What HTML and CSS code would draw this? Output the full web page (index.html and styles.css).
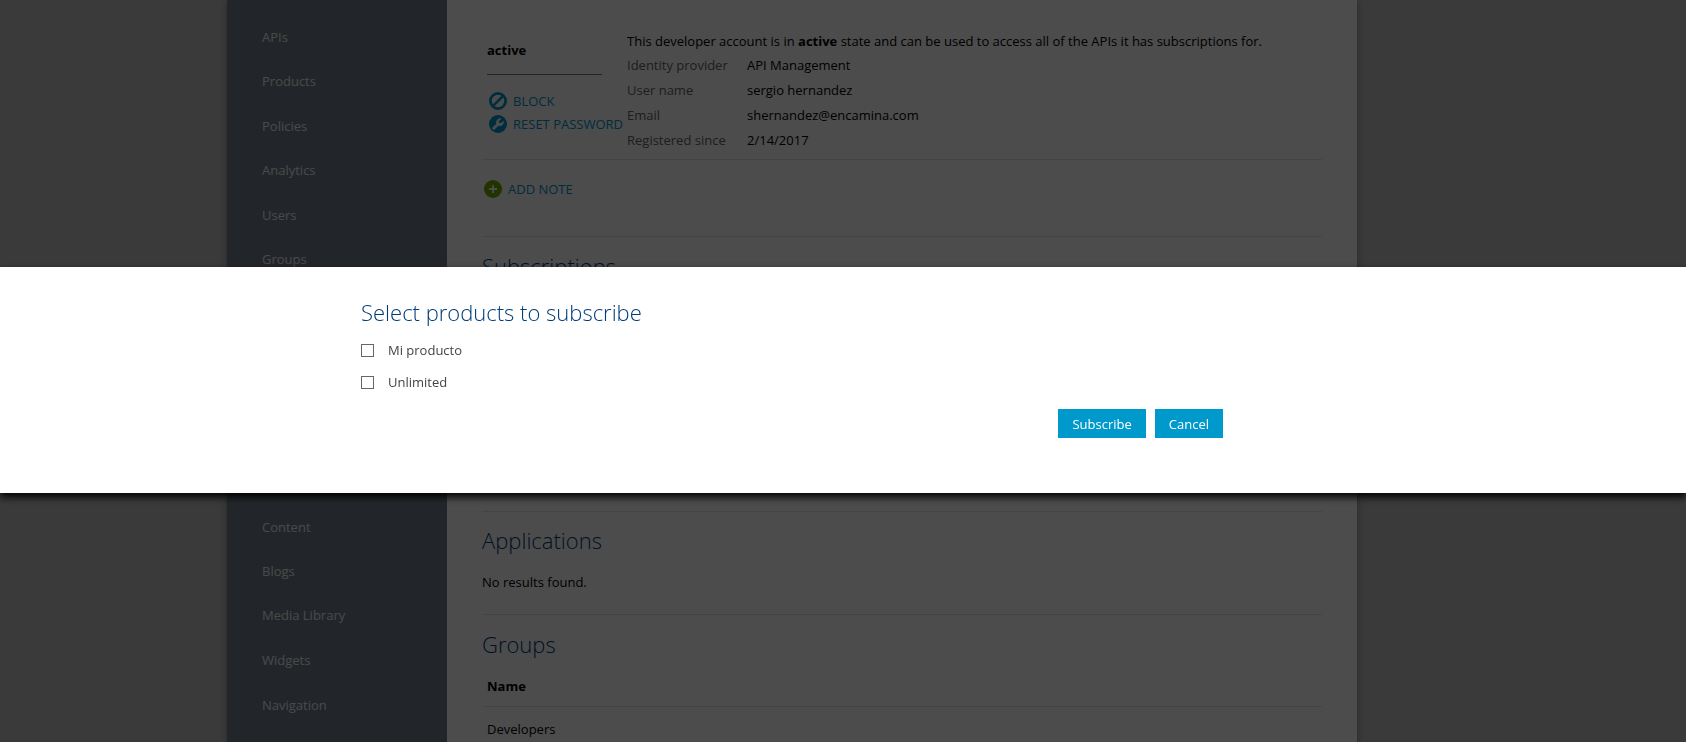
FILE: index.html
```
<!DOCTYPE html>
<html lang="en">
<head>
<meta charset="utf-8">
<title>Select products to subscribe</title>
<link rel="stylesheet" href="styles.css">
</head>
<body>
<div class="page">
  <nav class="sidebar">
    <ul class="menu menu-main">
      <li><a href="#">APIs</a></li>
      <li><a href="#">Products</a></li>
      <li><a href="#">Policies</a></li>
      <li><a href="#">Analytics</a></li>
      <li><a href="#">Users</a></li>
      <li><a href="#">Groups</a></li>
    </ul>
    <ul class="menu menu-portal">
      <li><a href="#">Content</a></li>
      <li><a href="#">Blogs</a></li>
      <li><a href="#">Media Library</a></li>
      <li><a href="#">Widgets</a></li>
      <li><a href="#">Navigation</a></li>
    </ul>
  </nav>
  <main class="content">
    <section class="account">
      <div class="state">
        <strong class="state-name">active</strong>
        <a class="action" href="#">
          <svg class="icon icon-blue" viewBox="0 0 18 18"><circle cx="9" cy="9" r="7.6" fill="none" stroke="currentColor" stroke-width="2.8"/><path d="M4.6 13.4 13.4 4.6" stroke="currentColor" stroke-width="2.6"/></svg>
          BLOCK</a>
        <a class="action" href="#">
          <svg class="icon icon-blue" viewBox="0 0 18 18"><circle cx="9" cy="9" r="9" fill="currentColor"/><path d="M12.6 3.7A4 4 0 0 0 7.3 8.8L3.7 12.2A1.4 1.4 0 0 0 5.8 14.3L9.4 10.8A4 4 0 0 0 14.6 5.8L12.2 8 10.2 7.9 10 5.9Z" fill="#fff"/></svg>
          RESET PASSWORD</a>
      </div>
      <div class="details">
        <p>This developer account is in <strong>active</strong> state and can be used to access all of the APIs it has subscriptions for.</p>
        <dl>
          <dt>Identity provider</dt><dd>API Management</dd>
          <dt>User name</dt><dd>sergio hernandez</dd>
          <dt>Email</dt><dd>shernandez@encamina.com</dd>
          <dt>Registered since</dt><dd>2/14/2017</dd>
        </dl>
      </div>
    </section>
    <section class="notes">
      <a class="action" href="#">
        <svg class="icon icon-green" viewBox="0 0 18 18"><circle cx="9" cy="9" r="9" fill="currentColor"/><path d="M9 5v8M5 9h8" stroke="#fff" stroke-width="1.8"/></svg>
        ADD NOTE</a>
    </section>
    <section class="subscriptions"><h2>Subscriptions</h2></section>
    <section class="applications">
      <h2>Applications</h2>
      <p>No results found.</p>
    </section>
    <section class="groups">
      <h2>Groups</h2>
      <table>
        <thead><tr><th scope="col">Name</th></tr></thead>
        <tbody><tr><td>Developers</td></tr></tbody>
      </table>
    </section>
  </main>
</div>
<div class="overlay">
  <form class="dialog" role="dialog" aria-labelledby="dialog-title">
    <div class="dialog-body">
      <h2 id="dialog-title">Select products to subscribe</h2>
      <label class="option"><input type="checkbox">Mi producto</label>
      <label class="option"><input type="checkbox">Unlimited</label>
      <div class="buttons">
        <button type="button">Subscribe</button>
        <button type="button">Cancel</button>
      </div>
    </div>
  </form>
</div>
</body>
</html>
```
FILE: styles.css
```
* { box-sizing: border-box; }
html { height: 100%; overflow: hidden; }
body {
  height: 100%;
  margin: 0;
  padding-right: 102px;
  background: #c3c3c3;
  color: #000;
  font: 13px/20px "Open Sans", "Noto Sans", sans-serif;
}
h2, p, dl, dd, ul { margin: 0; padding: 0; }
h2 {
  color: #003c78;
  font-size: 22px;
  font-weight: 300;
  line-height: 30px;
}
a { color: #0096cd; text-decoration: none; }

.page {
  display: flex;
  max-width: 1130px;
  min-height: 100%;
  margin: 0 auto;
  box-shadow: 0 0 8px rgba(0, 0, 0, 0.3);
}
.sidebar {
  flex: 0 0 220px;
  padding: 15px 35px 0;
  background: #747f8e;
}
.menu { display: grid; list-style: none; }
.menu-main { grid-auto-rows: 44px 44px 45px 44px 45px; margin-bottom: 223px; }
.menu-portal { grid-auto-rows: 45px 44px 44px 45px; }
.menu li { display: flex; align-items: center; }
.menu a { color: #f4f4f4; }

.content { flex: 1; min-width: 0; padding: 31px 35px 0; background: #fff; }
.content section { border-bottom: 1px solid #e4e4e4; }
.content .groups { border: 0; }
.content .account { display: flex; gap: 25px; height: 129px; padding-left: 5px; }
.state { flex: 0 0 115px; min-width: 0; padding-top: 9px; }
.state-name {
  display: block;
  margin-bottom: 14px;
  padding-bottom: 14px;
  border-bottom: 1px solid #777;
}
.action { display: flex; align-items: center; gap: 6px; height: 23px; white-space: nowrap; }
.state .action { padding-left: 2px; }
.icon { flex: none; width: 18px; height: 18px; }
.icon-blue { color: #0096cd; }
.icon-green { color: #74a800; }
.details p { margin-bottom: 1px; }
.details dl { display: grid; grid-template-columns: 120px 1fr; grid-auto-rows: 25px; align-items: center; }
.details dt { color: #666; }
.notes { height: 77px; padding: 17px 2px; }
.subscriptions { height: 275px; padding-top: 14px; }
.applications { height: 103px; padding-top: 13px; }
.applications p { margin-top: 17px; }
.groups { padding-top: 14px; }
.groups table { width: 100%; margin-top: 12px; border-collapse: collapse; }
.groups th, .groups td { padding: 5px 5px 9px; text-align: left; }
.groups th { padding-bottom: 10px; border-bottom: 1px solid #e4e4e4; }
.groups td { padding-top: 12px; }

.overlay { position: fixed; inset: 0; padding-top: 267px; background: rgba(0, 0, 0, 0.7); }
.dialog {
  padding: 30px 102px 55px 0;
  background: #fff;
  box-shadow: 0 4px 8px #000;
}
.dialog-body { max-width: 862px; margin: 0 auto; }
.dialog h2 { margin-bottom: 7px; }
.option {
  display: flex;
  align-items: center;
  gap: 14px;
  width: max-content;
  height: 32px;
  color: #444;
}
.option input {
  appearance: none;
  width: 13px;
  height: 13px;
  margin: 0;
  border: 1px solid #666;
  background: #fff;
}
.buttons { display: flex; justify-content: flex-end; gap: 9px; margin-top: 11px; }
.buttons button {
  height: 29px;
  padding: 0 14px;
  border: 0;
  background: #09c;
  color: #fff;
  font: inherit;
}
```
